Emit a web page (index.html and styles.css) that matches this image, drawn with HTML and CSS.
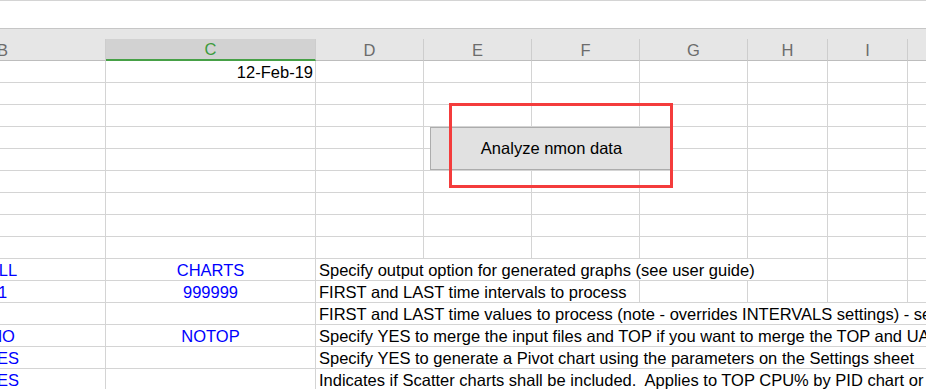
FILE: index.html
```html
<!DOCTYPE html>
<html>
	<head>
		<meta charset="UTF-8">
		<title>nmon analyser</title>
		<link rel="stylesheet" href="styles.css">
	</head>
	<body>
		<div id="sheet">
			<!-- formula bar strip -->
			<div class="strip"></div>

			<!-- column letters -->
			<div class="cols">
				<div class="hd">B</div>
				<div class="hd sel">C</div>
				<div class="hd">D</div>
				<div class="hd">E</div>
				<div class="hd">F</div>
				<div class="hd">G</div>
				<div class="hd">H</div>
				<div class="hd">I</div>
				<div class="hd"></div>
			</div>

			<div class="row">
				<div class="c"></div>
				<div class="c right">12-Feb-19</div>
				<div class="c"></div><div class="c"></div><div class="c"></div><div class="c"></div><div class="c"></div><div class="c"></div><div class="c"></div>
			</div>
			<div class="row">
				<div class="c"></div><div class="c"></div><div class="c"></div><div class="c"></div><div class="c"></div><div class="c"></div><div class="c"></div><div class="c"></div><div class="c"></div>
			</div>
			<div class="row">
				<div class="c"></div><div class="c"></div><div class="c"></div><div class="c"></div><div class="c"></div><div class="c"></div><div class="c"></div><div class="c"></div><div class="c"></div>
			</div>
			<div class="row">
				<div class="c"></div><div class="c"></div><div class="c"></div><div class="c"></div><div class="c"></div><div class="c"></div><div class="c"></div><div class="c"></div><div class="c"></div>
			</div>
			<div class="row">
				<div class="c"></div><div class="c"></div><div class="c"></div><div class="c"></div><div class="c"></div><div class="c"></div><div class="c"></div><div class="c"></div><div class="c"></div>
			</div>
			<div class="row">
				<div class="c"></div><div class="c"></div><div class="c"></div><div class="c"></div><div class="c"></div><div class="c"></div><div class="c"></div><div class="c"></div><div class="c"></div>
			</div>
			<div class="row">
				<div class="c"></div><div class="c"></div><div class="c"></div><div class="c"></div><div class="c"></div><div class="c"></div><div class="c"></div><div class="c"></div><div class="c"></div>
			</div>
			<div class="row">
				<div class="c"></div><div class="c"></div><div class="c"></div><div class="c"></div><div class="c"></div><div class="c"></div><div class="c"></div><div class="c"></div><div class="c"></div>
			</div>
			<div class="row">
				<div class="c"></div><div class="c"></div><div class="c"></div><div class="c"></div><div class="c"></div><div class="c"></div><div class="c"></div><div class="c"></div><div class="c"></div>
			</div>

			<!-- settings -->
			<div class="row">
				<div class="c val">ALL</div>
				<div class="c val">CHARTS</div>
				<div class="c note span5">Specify output option for generated graphs (see user guide)</div>
				<div class="c"></div><div class="c"></div>
			</div>
			<div class="row">
				<div class="c val">1</div>
				<div class="c val">999999</div>
				<div class="c note span3">FIRST and LAST time intervals to process</div>
				<div class="c"></div><div class="c"></div><div class="c"></div><div class="c"></div>
			</div>
			<div class="row">
				<div class="c val"></div>
				<div class="c val"></div>
				<div class="c note spanall">FIRST and LAST time values to process (note - overrides INTERVALS settings) - see user guide</div>
			</div>
			<div class="row">
				<div class="c val">NO</div>
				<div class="c val">NOTOP</div>
				<div class="c note spanall">Specify YES to merge the input files and TOP if you want to merge the TOP and UARG sections</div>
			</div>
			<div class="row">
				<div class="c val">YES</div>
				<div class="c val"></div>
				<div class="c note spanall">Specify YES to generate a Pivot chart using the parameters on the Settings sheet</div>
			</div>
			<div class="row">
				<div class="c val">YES</div>
				<div class="c val"></div>
				<div class="c note spanall">Indicates if Scatter charts shall be included.&nbsp; Applies to TOP CPU% by PID chart or</div>
			</div>

			<!-- floating macro button + callout -->
			<button class="macro">Analyze nmon data</button>
			<div class="callout"></div>
		</div>
	</body>
</html>
```

FILE: styles.css
```css
body {
	margin: 0;
	overflow: hidden;
	background-color: #ffffff;
	font-family: "Liberation Sans", Arial, sans-serif;
	font-size: 16.5px;
	color: #000000;
}
#sheet {
	position: relative;
	height: 389px;
	overflow: hidden;
}
.strip {
	box-sizing: border-box;
	height: 29px;
	border-top: 1px solid #d4d4d4;
	border-bottom: 1px solid #c6c6c6;
}
.cols, .row {
	display: grid;
	grid-template-columns: 206px 210px 108px 108px 108px 108px 80px 80px 80px;
	margin-left: -100px;
}
.cols {
	background-color: #e6e6e6;
	padding-top: 10px;
}
.hd {
	box-sizing: border-box;
	height: 22px;
	line-height: 22px;
	text-align: center;
	color: #6c6c6c;
	border-right: 1px solid #cdcdcd;
	border-bottom: 1px solid #bdbdbd;
}
.hd.sel {
	background-color: #d2d2d2;
	color: #3c9b3c;
	border-bottom: 2px solid #46a046;
	line-height: 21px;
}
.c {
	box-sizing: border-box;
	height: 22px;
	line-height: 22px;
	white-space: nowrap;
	overflow: hidden;
	border-right: 1px solid #d4d4d4;
	border-bottom: 1px solid #d4d4d4;
}
.right {
	text-align: right;
	padding-right: 2px;
}
.val {
	text-align: center;
	color: #0000ff;
}
.note {
	padding-left: 3px;
}
.span3 {
	grid-column: span 3;
}
.span5 {
	grid-column: span 5;
}
.spanall {
	grid-column: 3 / -1;
	border-right: none;
}
.macro {
	position: absolute;
	left: 430px;
	top: 127px;
	width: 243px;
	height: 43px;
	margin: 0;
	padding: 0;
	border: 1px solid #acacac;
	background-color: #e1e1e1;
	font-family: "Liberation Sans", Arial, sans-serif;
	font-size: 16.5px;
	color: #000000;
}
.callout {
	position: absolute;
	left: 449px;
	top: 103px;
	width: 224px;
	height: 85px;
	box-sizing: border-box;
	border: 3px solid #f43c3c;
}
```
